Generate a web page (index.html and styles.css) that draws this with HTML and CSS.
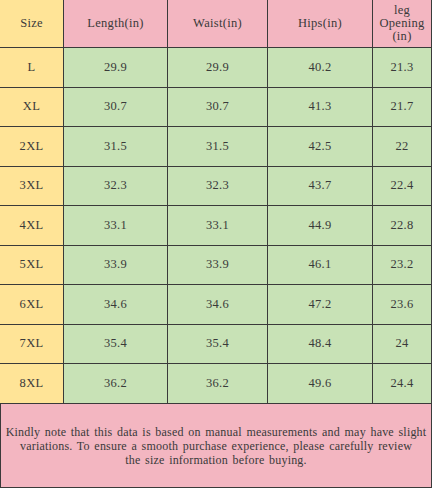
FILE: index.html
```html
<!DOCTYPE html>
<html>
<head>
<meta charset="utf-8">
<link rel="stylesheet" href="styles.css">
</head>
<body>
<div class="chart">
  <div class="grid">
    <div class="cell size head">Size</div>
    <div class="cell head">Length(in)</div>
    <div class="cell head">Waist(in)</div>
    <div class="cell head">Hips(in)</div>
    <div class="cell head">leg<br>Opening<br>(in)</div>

    <div class="cell size">L</div><div class="cell">29.9</div><div class="cell">29.9</div><div class="cell">40.2</div><div class="cell">21.3</div>
    <div class="cell size">XL</div><div class="cell">30.7</div><div class="cell">30.7</div><div class="cell">41.3</div><div class="cell">21.7</div>
    <div class="cell size">2XL</div><div class="cell">31.5</div><div class="cell">31.5</div><div class="cell">42.5</div><div class="cell">22</div>
    <div class="cell size">3XL</div><div class="cell">32.3</div><div class="cell">32.3</div><div class="cell">43.7</div><div class="cell">22.4</div>
    <div class="cell size">4XL</div><div class="cell">33.1</div><div class="cell">33.1</div><div class="cell">44.9</div><div class="cell">22.8</div>
    <div class="cell size">5XL</div><div class="cell">33.9</div><div class="cell">33.9</div><div class="cell">46.1</div><div class="cell">23.2</div>
    <div class="cell size">6XL</div><div class="cell">34.6</div><div class="cell">34.6</div><div class="cell">47.2</div><div class="cell">23.6</div>
    <div class="cell size">7XL</div><div class="cell">35.4</div><div class="cell">35.4</div><div class="cell">48.4</div><div class="cell">24</div>
    <div class="cell size">8XL</div><div class="cell">36.2</div><div class="cell">36.2</div><div class="cell">49.6</div><div class="cell">24.4</div>
  </div>
  <div class="note"><p class="note-text">Kindly note that this data is based on manual measurements and may have slight<br>variations. To ensure a smooth purchase experience, please carefully review<br>the size information before buying.</p></div>
</div>
</body>
</html>
```
FILE: styles.css
```css
html, body {
  margin: 0;
  padding: 0;
  background: #ffffff;
}
.chart {
  width: 432px;
  height: 488px;
  font-family: "Liberation Serif", serif;
  color: #3a3a3a;
  display: flex;
  flex-direction: column;
}
.grid {
  display: grid;
  grid-template-columns: 63px 103px 99px 104px 58px;
  grid-template-rows: 47px repeat(9, 38.5px);
  column-gap: 1px;
  row-gap: 1px;
  background: #3a3a3a;
  padding: 0 1px 1px 0;
}
.cell {
  background: #c8e2b6;
  display: flex;
  align-items: center;
  justify-content: center;
  text-align: center;
  font-size: 12.5px;
  letter-spacing: 0.3px;
  line-height: 13px;
}
.cell.head {
  background: #f3b6c1;
}
.cell.size {
  background: #ffe497;
}
.note {
  flex: 1;
  background: #f3b6c1;
  border: 1px solid #3a3a3a;
  border-top: none;
  display: flex;
  align-items: center;
  justify-content: center;
  text-align: center;
  padding: 2px 1px 0;
}
.note-text {
  margin: 0;
  font-size: 12px;
  letter-spacing: 0.2px;
  word-spacing: 1.4px;
  line-height: 14px;
  white-space: nowrap;
}
```
